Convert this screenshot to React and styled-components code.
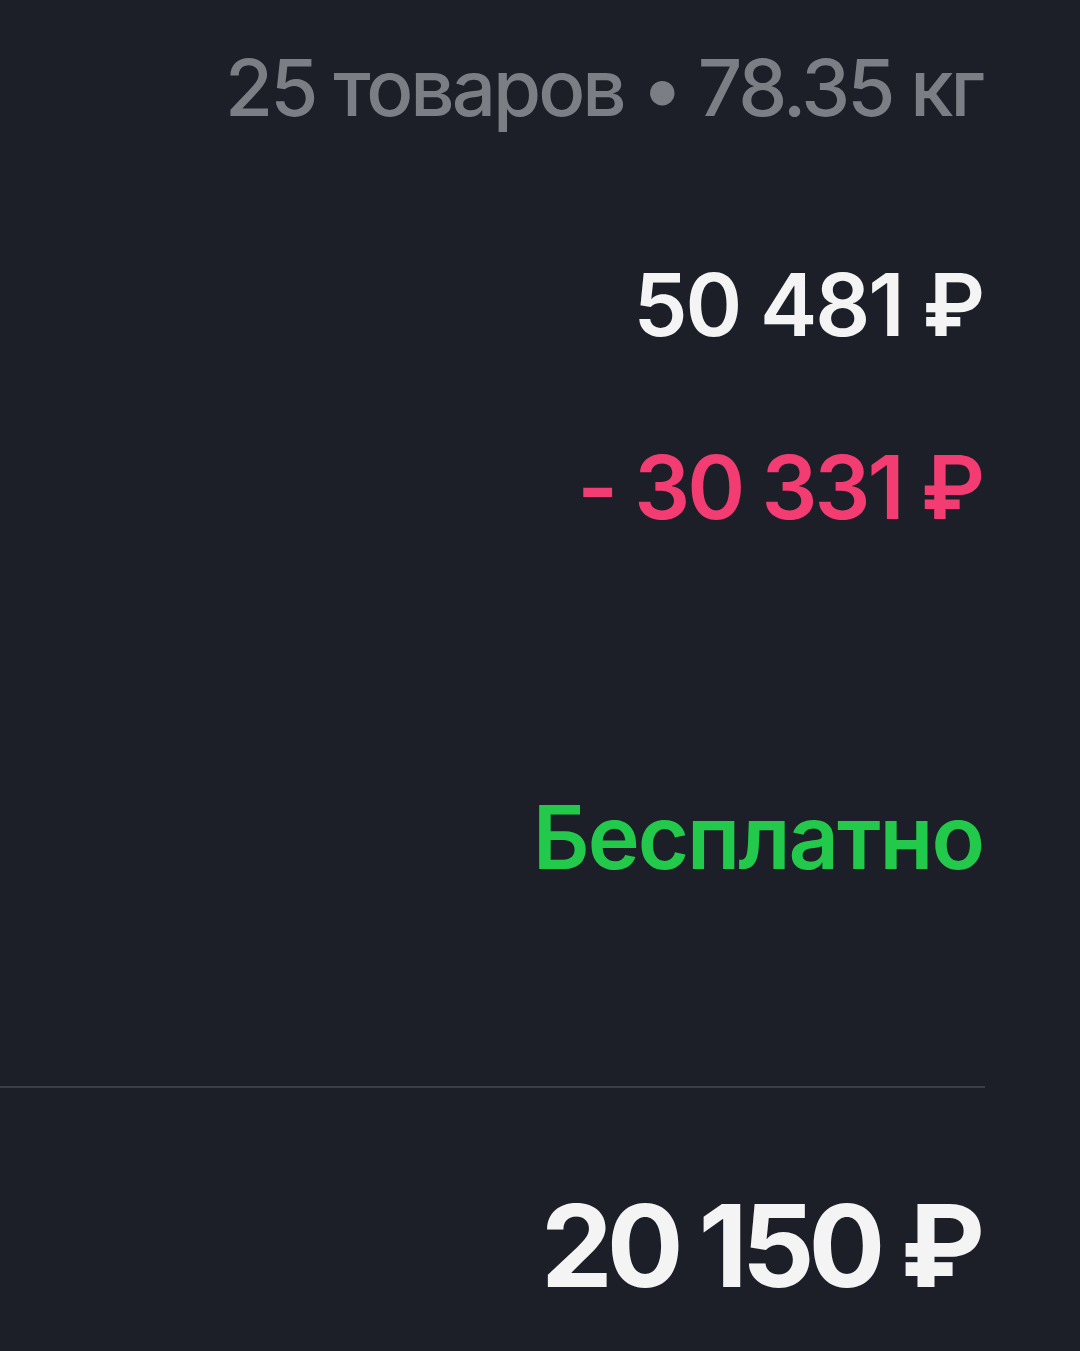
import React from 'react';
import styled, { createGlobalStyle } from 'styled-components';

const GlobalStyle = createGlobalStyle`
  html, body {
    margin: 0;
    padding: 0;
    background: #1c1f27;
  }
  body {
    font-family: Inter, "Noto Sans", sans-serif;
  }
`;

const Summary = styled.div`
  display: flex;
  flex-direction: column;
  align-items: flex-end;
  width: 1080px;
  height: 1351px;
  box-sizing: border-box;
  padding: 49px 95px 0 0;
  background: #1c1f27;
  overflow: hidden;
`;

const Value = styled.div`
  line-height: 1;
  white-space: nowrap;
  font-size: ${p => p.size}px;
  font-weight: ${p => p.weight || 600};
  color: ${p => p.color || '#f4f4f5'};
  margin-top: ${p => p.gap || 0}px;
  letter-spacing: ${p => p.spacing || 0}px;
  margin-right: ${p => -(p.spacing || 0)}px;
`;

const Divider = styled.div`
  align-self: stretch;
  height: 2px;
  margin-top: 205px;
  background: #3b3e45;
`;

export default function App() {
  return (
    <>
      <GlobalStyle />
      <Summary>
        <Value size={78} weight={500} color="#7b7e85" spacing={-3}>25 товаров • 78.35 кг</Value>
        <Value size={86} gap={135} spacing={-2}>50 481 ₽</Value>
        <Value size={88} gap={95} color="#f23c72" spacing={-3}>- 30 331 ₽</Value>
        <Value size={88} gap={262} color="#22c94b" spacing={-2}>Бесплатно</Value>
        <Divider />
        <Value size={114} weight={700} gap={101} spacing={-6}>20 150 ₽</Value>
      </Summary>
    </>
  );
}
